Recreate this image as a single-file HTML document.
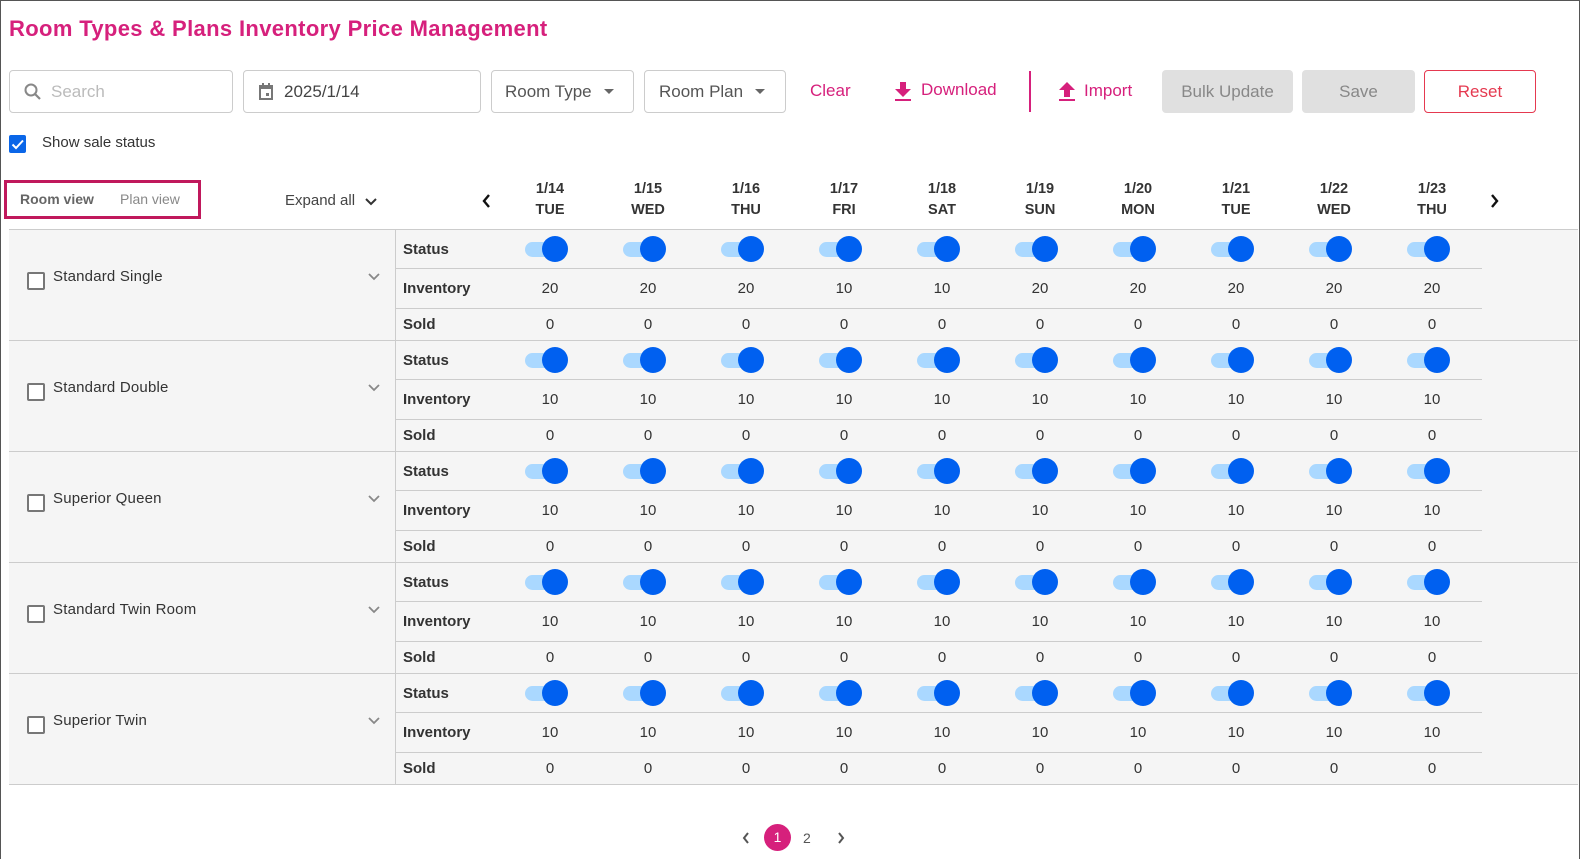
<!DOCTYPE html>
<html><head><meta charset="utf-8"><style>
*{box-sizing:border-box;margin:0;padding:0}
body{width:1583px;height:859px;background:#fff;font-family:"Liberation Sans",sans-serif;color:#333;position:relative;overflow:hidden}
.frame{position:absolute;left:0;top:0;width:1580px;height:859px;border:1px solid #555;border-bottom:none}
.a{position:absolute}
.title{left:9px;top:16px;font-size:22px;font-weight:bold;color:#d6207c;letter-spacing:0.35px}
.inp{border:1px solid #ccc;border-radius:4px;height:43px;top:70px;font-size:17px;display:flex;align-items:center}
.btn{top:70px;height:43px;border-radius:4px;font-size:17px;display:flex;align-items:center;justify-content:center}
.pink{color:#d6207c;font-size:17px}
.dh{top:179px;width:98px;text-align:center;font-size:14.5px;font-weight:bold;color:#333;line-height:21px}
.blk{position:absolute;left:9px;width:1569px;height:111px;background:#f5f5f5;border-bottom:1px solid #ccc}
.lc{position:absolute;left:0;top:0;width:387px;height:110px;border-right:1px solid #ccc}
.cb{position:absolute;left:18px;top:42px;width:18px;height:18px;border:2px solid #777;border-radius:2px;background:#fff}
.nm{position:absolute;left:44px;top:38px;font-size:15px;color:#333;letter-spacing:0.2px}
.chev{position:absolute;left:358px;top:42px}
.r{position:absolute;left:387px;width:1086px;display:flex;align-items:center}
.r .l{width:105px;padding-left:7px;font-size:15px;font-weight:bold;color:#333}
.r .c{width:98px;text-align:center;font-size:15px;color:#333}
.bd{border-bottom:1px solid #ccc}
.tg{display:inline-block;position:relative;width:50px;height:26px;vertical-align:middle}
.tg:before{content:"";position:absolute;left:0;top:6px;width:35px;height:15px;border-radius:8px;background:#aad8ff}
.tg:after{content:"";position:absolute;left:17px;top:0;width:26px;height:26px;border-radius:50%;background:#0060f0}
</style></head><body>
<div class="frame"></div>
<div class="a title">Room Types &amp; Plans Inventory Price Management</div>

<div class="a inp" style="left:9px;width:224px"><svg style="margin-left:13px" width="20" height="20" viewBox="0 0 20 20"><circle cx="8" cy="8" r="5.5" stroke="#888" stroke-width="2" fill="none"/><path d="M12 12l5 5" stroke="#888" stroke-width="2.2"/></svg><span style="margin-left:8px;color:#bbb">Search</span></div>
<div class="a inp" style="left:243px;width:238px"><svg style="margin-left:14px" width="16" height="18" viewBox="0 0 16 18"><rect x="2" y="3" width="12" height="13" stroke="#777" stroke-width="2" fill="none"/><rect x="2" y="3" width="12" height="3" fill="#777"/><rect x="4" y="0" width="2" height="4" fill="#777"/><rect x="10" y="0" width="2" height="4" fill="#777"/><rect x="8" y="10" width="3" height="3" fill="#777"/></svg><span style="margin-left:10px;color:#444">2025/1/14</span></div>
<div class="a inp" style="left:491px;width:143px"><span style="margin-left:13px;color:#555">Room Type</span><span style="margin-left:12px;border:5px solid transparent;border-top-color:#666;margin-top:5px"></span></div>
<div class="a inp" style="left:644px;width:142px"><span style="margin-left:14px;color:#555">Room Plan</span><span style="margin-left:12px;border:5px solid transparent;border-top-color:#666;margin-top:5px"></span></div>
<div class="a pink" style="left:810px;top:81px">Clear</div>
<svg class="a" style="left:894px;top:82px" width="18" height="19" viewBox="0 0 18 19"><path d="M6 0h6v7h5l-8 8-8-8h5z" fill="#d6207c"/><rect x="1" y="17" width="16" height="2" fill="#d6207c"/></svg>
<div class="a pink" style="left:921px;top:80px">Download</div>
<div class="a" style="left:1029px;top:71px;width:2px;height:41px;background:#d6207c"></div>
<svg class="a" style="left:1058px;top:82px" width="18" height="19" viewBox="0 0 18 19"><path d="M9 0l8 8h-5v7h-6v-7h-5z" fill="#d6207c"/><rect x="1" y="17" width="16" height="2" fill="#d6207c"/></svg>
<div class="a pink" style="left:1084px;top:81px">Import</div>
<div class="a btn" style="left:1162px;width:131px;background:#e0e0e0;color:#888">Bulk Update</div>
<div class="a btn" style="left:1302px;width:113px;background:#e0e0e0;color:#888">Save</div>
<div class="a btn" style="left:1424px;width:112px;border:1px solid #e53950;color:#e53950">Reset</div>

<div class="a" style="left:9px;top:135px;width:17px;height:18px;background:#0a66e8;border-radius:2px"><svg width="17" height="18" viewBox="0 0 17 18"><path d="M3.5 9.5l3.5 3.5 7-7.5" stroke="#fff" stroke-width="2" fill="none"/></svg></div>
<div class="a" style="left:42px;top:134px;font-size:15px;color:#333">Show sale status</div>

<div class="a" style="left:4px;top:180px;width:197px;height:39px;border:3px solid #c0185c"></div>
<div class="a" style="left:20px;top:191px;font-size:14px;font-weight:bold;color:#666">Room view</div>
<div class="a" style="left:120px;top:191px;font-size:14px;color:#888">Plan view</div>
<div class="a" style="left:285px;top:192px;font-size:15px;color:#444">Expand all</div>
<svg class="a" style="left:364px;top:197px" width="14" height="10" viewBox="0 0 14 10"><path d="M2 2l5 5 5-5" stroke="#333" stroke-width="2" fill="none"/></svg>
<svg class="a" style="left:481px;top:193px" width="10" height="16" viewBox="0 0 10 16"><path d="M8 2L3 8l5 6" stroke="#111" stroke-width="2.4" fill="none"/></svg>
<svg class="a" style="left:1490px;top:193px" width="10" height="16" viewBox="0 0 10 16"><path d="M2 2l5 6-5 6" stroke="#111" stroke-width="2.4" fill="none"/></svg>

<div class="a dh" style="left:501px">1/14<br>TUE</div>
<div class="a dh" style="left:599px">1/15<br>WED</div>
<div class="a dh" style="left:697px">1/16<br>THU</div>
<div class="a dh" style="left:795px">1/17<br>FRI</div>
<div class="a dh" style="left:893px">1/18<br>SAT</div>
<div class="a dh" style="left:991px">1/19<br>SUN</div>
<div class="a dh" style="left:1089px">1/20<br>MON</div>
<div class="a dh" style="left:1187px">1/21<br>TUE</div>
<div class="a dh" style="left:1285px">1/22<br>WED</div>
<div class="a dh" style="left:1383px">1/23<br>THU</div>

<div class="a" style="left:9px;top:229px;width:1569px;height:1px;background:#ccc"></div>

<div class="blk" style="top:230px"><div class="lc"><div class="cb"></div><div class="nm">Standard Single</div><svg class="chev" width="14" height="10" viewBox="0 0 14 10"><path d="M2 2l5 5 5-5" stroke="#888" stroke-width="1.8" fill="none"/></svg></div>
<div class="r bd" style="top:0;height:39px"><div class="l">Status</div><div class="c"><span class="tg"></span></div><div class="c"><span class="tg"></span></div><div class="c"><span class="tg"></span></div><div class="c"><span class="tg"></span></div><div class="c"><span class="tg"></span></div><div class="c"><span class="tg"></span></div><div class="c"><span class="tg"></span></div><div class="c"><span class="tg"></span></div><div class="c"><span class="tg"></span></div><div class="c"><span class="tg"></span></div></div>
<div class="r bd" style="top:39px;height:40px"><div class="l">Inventory</div><div class="c">20</div><div class="c">20</div><div class="c">20</div><div class="c">10</div><div class="c">10</div><div class="c">20</div><div class="c">20</div><div class="c">20</div><div class="c">20</div><div class="c">20</div></div>
<div class="r" style="top:79px;height:31px"><div class="l">Sold</div><div class="c">0</div><div class="c">0</div><div class="c">0</div><div class="c">0</div><div class="c">0</div><div class="c">0</div><div class="c">0</div><div class="c">0</div><div class="c">0</div><div class="c">0</div></div></div>

<div class="blk" style="top:341px"><div class="lc"><div class="cb"></div><div class="nm">Standard Double</div><svg class="chev" width="14" height="10" viewBox="0 0 14 10"><path d="M2 2l5 5 5-5" stroke="#888" stroke-width="1.8" fill="none"/></svg></div>
<div class="r bd" style="top:0;height:39px"><div class="l">Status</div><div class="c"><span class="tg"></span></div><div class="c"><span class="tg"></span></div><div class="c"><span class="tg"></span></div><div class="c"><span class="tg"></span></div><div class="c"><span class="tg"></span></div><div class="c"><span class="tg"></span></div><div class="c"><span class="tg"></span></div><div class="c"><span class="tg"></span></div><div class="c"><span class="tg"></span></div><div class="c"><span class="tg"></span></div></div>
<div class="r bd" style="top:39px;height:40px"><div class="l">Inventory</div><div class="c">10</div><div class="c">10</div><div class="c">10</div><div class="c">10</div><div class="c">10</div><div class="c">10</div><div class="c">10</div><div class="c">10</div><div class="c">10</div><div class="c">10</div></div>
<div class="r" style="top:79px;height:31px"><div class="l">Sold</div><div class="c">0</div><div class="c">0</div><div class="c">0</div><div class="c">0</div><div class="c">0</div><div class="c">0</div><div class="c">0</div><div class="c">0</div><div class="c">0</div><div class="c">0</div></div></div>

<div class="blk" style="top:452px"><div class="lc"><div class="cb"></div><div class="nm">Superior Queen</div><svg class="chev" width="14" height="10" viewBox="0 0 14 10"><path d="M2 2l5 5 5-5" stroke="#888" stroke-width="1.8" fill="none"/></svg></div>
<div class="r bd" style="top:0;height:39px"><div class="l">Status</div><div class="c"><span class="tg"></span></div><div class="c"><span class="tg"></span></div><div class="c"><span class="tg"></span></div><div class="c"><span class="tg"></span></div><div class="c"><span class="tg"></span></div><div class="c"><span class="tg"></span></div><div class="c"><span class="tg"></span></div><div class="c"><span class="tg"></span></div><div class="c"><span class="tg"></span></div><div class="c"><span class="tg"></span></div></div>
<div class="r bd" style="top:39px;height:40px"><div class="l">Inventory</div><div class="c">10</div><div class="c">10</div><div class="c">10</div><div class="c">10</div><div class="c">10</div><div class="c">10</div><div class="c">10</div><div class="c">10</div><div class="c">10</div><div class="c">10</div></div>
<div class="r" style="top:79px;height:31px"><div class="l">Sold</div><div class="c">0</div><div class="c">0</div><div class="c">0</div><div class="c">0</div><div class="c">0</div><div class="c">0</div><div class="c">0</div><div class="c">0</div><div class="c">0</div><div class="c">0</div></div></div>

<div class="blk" style="top:563px"><div class="lc"><div class="cb"></div><div class="nm">Standard Twin Room</div><svg class="chev" width="14" height="10" viewBox="0 0 14 10"><path d="M2 2l5 5 5-5" stroke="#888" stroke-width="1.8" fill="none"/></svg></div>
<div class="r bd" style="top:0;height:39px"><div class="l">Status</div><div class="c"><span class="tg"></span></div><div class="c"><span class="tg"></span></div><div class="c"><span class="tg"></span></div><div class="c"><span class="tg"></span></div><div class="c"><span class="tg"></span></div><div class="c"><span class="tg"></span></div><div class="c"><span class="tg"></span></div><div class="c"><span class="tg"></span></div><div class="c"><span class="tg"></span></div><div class="c"><span class="tg"></span></div></div>
<div class="r bd" style="top:39px;height:40px"><div class="l">Inventory</div><div class="c">10</div><div class="c">10</div><div class="c">10</div><div class="c">10</div><div class="c">10</div><div class="c">10</div><div class="c">10</div><div class="c">10</div><div class="c">10</div><div class="c">10</div></div>
<div class="r" style="top:79px;height:31px"><div class="l">Sold</div><div class="c">0</div><div class="c">0</div><div class="c">0</div><div class="c">0</div><div class="c">0</div><div class="c">0</div><div class="c">0</div><div class="c">0</div><div class="c">0</div><div class="c">0</div></div></div>

<div class="blk" style="top:674px"><div class="lc"><div class="cb"></div><div class="nm">Superior Twin</div><svg class="chev" width="14" height="10" viewBox="0 0 14 10"><path d="M2 2l5 5 5-5" stroke="#888" stroke-width="1.8" fill="none"/></svg></div>
<div class="r bd" style="top:0;height:39px"><div class="l">Status</div><div class="c"><span class="tg"></span></div><div class="c"><span class="tg"></span></div><div class="c"><span class="tg"></span></div><div class="c"><span class="tg"></span></div><div class="c"><span class="tg"></span></div><div class="c"><span class="tg"></span></div><div class="c"><span class="tg"></span></div><div class="c"><span class="tg"></span></div><div class="c"><span class="tg"></span></div><div class="c"><span class="tg"></span></div></div>
<div class="r bd" style="top:39px;height:40px"><div class="l">Inventory</div><div class="c">10</div><div class="c">10</div><div class="c">10</div><div class="c">10</div><div class="c">10</div><div class="c">10</div><div class="c">10</div><div class="c">10</div><div class="c">10</div><div class="c">10</div></div>
<div class="r" style="top:79px;height:31px"><div class="l">Sold</div><div class="c">0</div><div class="c">0</div><div class="c">0</div><div class="c">0</div><div class="c">0</div><div class="c">0</div><div class="c">0</div><div class="c">0</div><div class="c">0</div><div class="c">0</div></div></div>

<svg class="a" style="left:741px;top:831px" width="10" height="14" viewBox="0 0 10 14"><path d="M7 2L3 7l4 5" stroke="#555" stroke-width="2" fill="none"/></svg>
<div class="a" style="left:764px;top:824px;width:27px;height:27px;border-radius:50%;background:#d6207c;color:#fff;font-size:14px;text-align:center;line-height:27px">1</div>
<div class="a" style="left:803px;top:830px;font-size:14px;color:#555">2</div>
<svg class="a" style="left:836px;top:831px" width="10" height="14" viewBox="0 0 10 14"><path d="M3 2l4 5-4 5" stroke="#555" stroke-width="2" fill="none"/></svg>
</body></html>
